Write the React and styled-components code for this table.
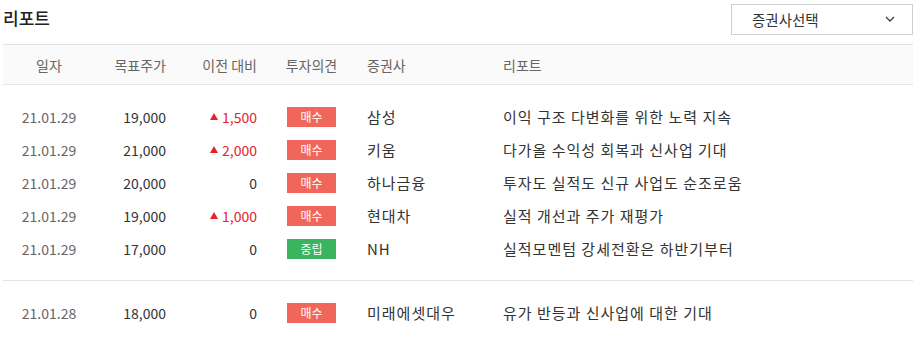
import React from "react";
import styled, { createGlobalStyle } from "styled-components";

const GlobalStyle = createGlobalStyle`
  body {
    margin: 0;
    background: #fff;
    font-family: "Noto Sans CJK KR", "Noto Sans", sans-serif;
  }
`;

const reports = [
  { group: 1, date: "21.01.29", price: "19,000", diff: "1,500", up: true, opinion: "buy", firm: "삼성", title: "이익 구조 다변화를 위한 노력 지속" },
  { group: 1, date: "21.01.29", price: "21,000", diff: "2,000", up: true, opinion: "buy", firm: "키움", title: "다가올 수익성 회복과 신사업 기대" },
  { group: 1, date: "21.01.29", price: "20,000", diff: "0", up: false, opinion: "buy", firm: "하나금융", title: "투자도 실적도 신규 사업도 순조로움" },
  { group: 1, date: "21.01.29", price: "19,000", diff: "1,000", up: true, opinion: "buy", firm: "현대차", title: "실적 개선과 주가 재평가" },
  { group: 1, date: "21.01.29", price: "17,000", diff: "0", up: false, opinion: "hold", firm: "NH", title: "실적모멘텀 강세전환은 하반기부터" },
  { group: 2, date: "21.01.28", price: "18,000", diff: "0", up: false, opinion: "buy", firm: "미래에셋대우", title: "유가 반등과 신사업에 대한 기대" },
];

const Page = styled.div`
  width: 910px;
  padding-left: 3px;
`;

const TopBar = styled.div`
  height: 44px;
  display: flex;
  align-items: flex-start;
  justify-content: space-between;
`;

const Title = styled.h2`
  margin: 0;
  padding-top: 6px;
  font-size: 17px;
  line-height: 24px;
  font-weight: 500;
  color: #222;
`;

const Select = styled.div`
  margin-top: 4px;
  border: 1px solid #cfcfcf;
  display: flex;
  align-items: center;
  justify-content: space-between;
  padding: 0 17px 0 20px;
  box-sizing: border-box;
  width: 182px;
  height: 31px;
  font-size: 14.5px;
  color: #333;
`;

const Grid = styled.div`
  display: grid;
  grid-template-columns: 92px 71px 91px 109px 136px 1fr;
  align-items: center;
`;

const Head = styled(Grid)`
  height: 39px;
  background: #fafafa;
  border-top: 1px solid #e4e4e4;
  border-bottom: 1px solid #e4e4e4;
  font-size: 14px;
  color: #666;
`;

const Group = styled.div`
  padding: 15px 0;
  & + & {
    border-top: 1px solid #e4e4e4;
  }
`;

const Row = styled(Grid)`
  height: 33px;
  font-size: 14px;
  color: #333;
`;

const Cell = styled.div`
  text-align: ${(p) => p.align || "left"};
  padding-left: ${(p) => (p.align === "left" || !p.align ? "1px" : "0")};
  white-space: nowrap;
  color: ${(p) => p.color || "inherit"};
`;

const TextCell = styled(Cell)`
  font-size: 15px;
  letter-spacing: 1px;
  color: #333;
`;

const Diff = styled(Cell)`
  color: ${(p) => (p.up ? "#e3242b" : "#333")};
  display: flex;
  justify-content: flex-end;
  align-items: center;
  gap: 4px;
`;

const Up = styled.span`
  width: 0;
  height: 0;
  border-left: 4px solid transparent;
  border-right: 4px solid transparent;
  border-bottom: 7px solid #e3242b;
`;

const BadgeCell = styled.div`
  display: flex;
  justify-content: center;
`;

const Badge = styled.span`
  width: 49px;
  height: 20px;
  line-height: 20px;
  text-align: center;
  font-size: 12px;
  color: #fff;
  background: ${(p) => (p.kind === "hold" ? "#3bb460" : "#f0665a")};
`;

const Chevron = () => (
  <svg width="10" height="7" viewBox="0 0 10 7" fill="none">
    <path d="M1 1l4 4 4-4" stroke="#444" strokeWidth="1.4" />
  </svg>
);

export default function App() {
  const groups = [1, 2];
  return (
    <Page>
      <GlobalStyle />
      <TopBar>
        <Title>리포트</Title>
        <Select>
          <span>증권사선택</span>
          <Chevron />
        </Select>
      </TopBar>
      <Head>
        <Cell align="center">일자</Cell>
        <Cell align="right">목표주가</Cell>
        <Cell align="right">이전 대비</Cell>
        <Cell align="center">투자의견</Cell>
        <Cell>증권사</Cell>
        <Cell>리포트</Cell>
      </Head>
      {groups.map((g) => (
        <Group key={g}>
          {reports
            .filter((r) => r.group === g)
            .map((r, i) => (
              <Row key={i}>
                <Cell align="center" color="#666">{r.date}</Cell>
                <Cell align="right">{r.price}</Cell>
                <Diff up={r.up}>
                  {r.up && <Up />}
                  {r.diff}
                </Diff>
                <BadgeCell>
                  <Badge kind={r.opinion}>{r.opinion === "hold" ? "중립" : "매수"}</Badge>
                </BadgeCell>
                <TextCell>{r.firm}</TextCell>
                <TextCell>{r.title}</TextCell>
              </Row>
            ))}
        </Group>
      ))}
    </Page>
  );
}
